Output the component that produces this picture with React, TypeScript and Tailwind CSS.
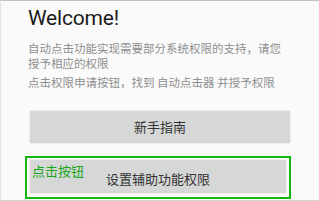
import React from "react";

export default function App() {
  return (
    <div className="w-[319px] h-[201px] bg-[#fafafa] border-t border-t-[#c2c2c2] border-b border-b-[#d0d0d0] border-l border-l-[#e4e4e4] overflow-hidden flex flex-col" style={{ fontFamily: "'Noto Sans CJK SC', sans-serif" }}>
      <div className="pl-[27px] pt-[6px] text-[21px] tracking-[-0.2px] leading-[22px] text-[#1a1a1a] font-['Roboto',sans-serif]">Welcome!</div>
      <div className="pl-[27px] mt-[12px] text-[11.5px] leading-[15px] text-[#8e8e8e] whitespace-nowrap">
        <div>自动点击功能实现需要部分系统权限的支持，请您</div>
        <div>授予相应的权限</div>
        <div className="mt-[4px]">点击权限申请按钮，找到 自动点击器 并授予权限</div>
      </div>
      <div className="ml-[29px] mt-[21px] w-[260px] h-[32px] bg-[#d6d7d7] shadow-[0_0_2px_rgba(0,0,0,0.15)] flex items-center justify-center text-[13px] text-[#333333]">新手指南</div>
      <div className="relative ml-[24px] mt-[13px] w-[266px] h-[43px] border-2 border-[#12b812] pl-[3px] pt-[2px]">
        <div className="w-[256px] h-[33px] bg-[#d6d7d7] shadow-[0_0_2px_rgba(0,0,0,0.15)] flex items-center justify-center pt-[5px] text-[13px] text-[#333333]">设置辅助功能权限</div>
        <div className="absolute left-[5px] top-[5px] text-[13px] leading-[16px] text-[#1aa61a]">点击按钮</div>
      </div>
    </div>
  );
}
